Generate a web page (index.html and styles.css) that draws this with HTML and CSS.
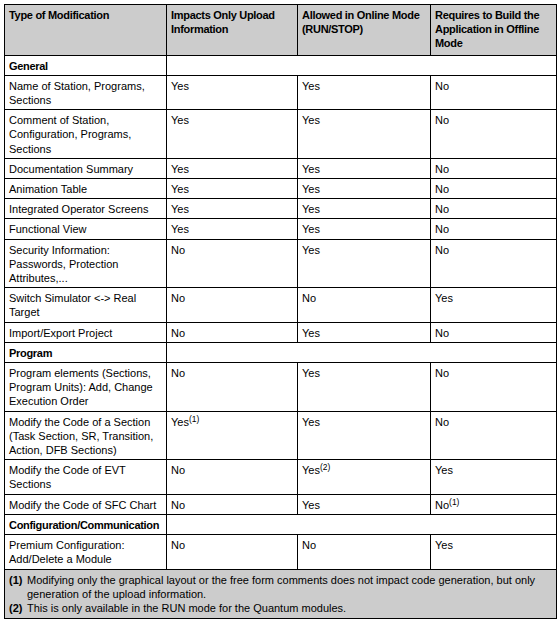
FILE: index.html
```html
<!DOCTYPE html>
<html>
<head>
<meta charset="utf-8">
<link rel="stylesheet" href="styles.css">
</head>
<body>
<table class="mods">
  <colgroup>
    <col class="c1"><col class="c2"><col class="c3"><col class="c4">
  </colgroup>
  <thead>
    <tr class="head">
      <th>Type of Modification</th>
      <th>Impacts Only Upload Information</th>
      <th>Allowed in Online Mode (RUN/STOP)</th>
      <th>Requires to Build the Application in Offline Mode</th>
    </tr>
  </thead>
  <tbody>
    <tr class="section"><td>General</td><td colspan="3"></td></tr>
    <tr><td>Name of Station, Programs, Sections</td><td>Yes</td><td>Yes</td><td>No</td></tr>
    <tr><td>Comment of Station, Configuration, Programs, Sections</td><td>Yes</td><td>Yes</td><td>No</td></tr>
    <tr><td>Documentation Summary</td><td>Yes</td><td>Yes</td><td>No</td></tr>
    <tr><td>Animation Table</td><td>Yes</td><td>Yes</td><td>No</td></tr>
    <tr><td>Integrated Operator Screens</td><td>Yes</td><td>Yes</td><td>No</td></tr>
    <tr><td>Functional View</td><td>Yes</td><td>Yes</td><td>No</td></tr>
    <tr><td>Security Information: Passwords, Protection Attributes,...</td><td>No</td><td>Yes</td><td>No</td></tr>
    <tr><td>Switch Simulator &lt;-&gt; Real Target</td><td>No</td><td>No</td><td>Yes</td></tr>
    <tr><td>Import/Export Project</td><td>No</td><td>Yes</td><td>No</td></tr>
    <tr class="section"><td>Program</td><td colspan="3"></td></tr>
    <tr><td>Program elements (Sections, Program Units): Add, Change Execution Order</td><td>No</td><td>Yes</td><td>No</td></tr>
    <tr><td>Modify the Code of a Section (Task Section, SR, Transition, Action, DFB Sections)</td><td>Yes<sup>(1)</sup></td><td>Yes</td><td>No</td></tr>
    <tr><td>Modify the Code of EVT Sections</td><td>No</td><td>Yes<sup>(2)</sup></td><td>Yes</td></tr>
    <tr><td>Modify the Code of SFC Chart</td><td>No</td><td>Yes</td><td class="low">No<sup>(1)</sup></td></tr>
    <tr class="section"><td>Configuration/Communication</td><td colspan="3"></td></tr>
    <tr><td>Premium Configuration: Add/Delete a Module</td><td>No</td><td>No</td><td>Yes</td></tr>
    <tr class="notes">
      <td colspan="4">
        <div class="note"><span class="num">(1)</span><span class="txt">Modifying only the graphical layout or the free form comments does not impact code generation, but only generation of the upload information.</span></div>
        <div class="note"><span class="num">(2)</span><span class="txt">This is only available in the RUN mode for the Quantum modules.</span></div>
      </td>
    </tr>
  </tbody>
</table>
</body>
</html>
```
FILE: styles.css
```css
html, body {
  margin: 0;
  padding: 0;
  background: #ffffff;
}
body {
  padding: 4px 0 0 4px;
  font-family: "Liberation Sans", Arial, sans-serif;
  font-size: 11px;
  color: #000;
}
.mods {
  border-collapse: collapse;
  table-layout: fixed;
  width: 552px;
  border: 1px solid #000;
}
.c1 { width: 162px; }
.c2 { width: 131px; }
.c3 { width: 133px; }
.c4 { width: 126px; }
.mods th, .mods td {
  border: 1px solid #000;
  padding: 3px 4px 2px 4px;
  line-height: 14.2px;
  text-align: left;
  vertical-align: top;
}
.mods th {
  font-weight: bold;
  letter-spacing: -0.3px;
  background: #cccccc;
  padding-bottom: 4px;
}
.section td {
  font-weight: bold;
  letter-spacing: -0.3px;
}
.section td + td {
  font-weight: normal;
}
sup {
  font-size: 8.5px;
  line-height: 0;
  vertical-align: 4px;
}
.low {
  padding-top: 5px;
}
.notes td {
  background: #cccccc;
  padding-bottom: 3px;
}
.note {
  display: flex;
}
.num {
  font-weight: bold;
  width: 18px;
  flex: none;
}
.txt {
  flex: 1;
}
```
